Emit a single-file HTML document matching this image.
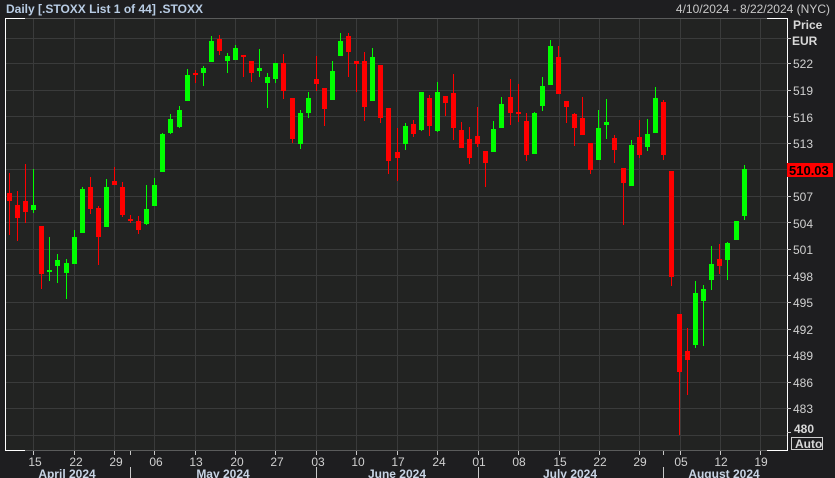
<!DOCTYPE html>
<html><head><meta charset="utf-8"><style>
html,body{margin:0;padding:0;background:#1e1e20;}
body{width:835px;height:478px;overflow:hidden;position:relative;font-family:"Liberation Sans","DejaVu Sans",sans-serif;}
svg{position:absolute;left:0;top:0;}
</style></head><body>
<svg width="835" height="478" viewBox="0 0 835 478" xmlns="http://www.w3.org/2000/svg">
<rect x="0" y="0" width="835" height="478" fill="#1e1e20"/>
<rect x="5" y="18" width="782" height="432" fill="#222322"/>
<g stroke="#3a3b3b" stroke-width="1">
<path d="M5 38.5H787M5 63.5H787M5 90.5H787M5 116.5H787M5 143.5H787M5 169.5H787M5 196.5H787M5 222.5H787M5 249.5H787M5 275.5H787M5 302.5H787M5 329.5H787M5 355.5H787M5 382.5H787M5 408.5H787M5 435.5H787"/>
<path d="M33.5 18V450M74.5 18V450M114.5 18V450M154.5 18V450M195.5 18V450M235.5 18V450M275.5 18V450M316.5 18V450M356.5 18V450M397.5 18V450M437.5 18V450M478.5 18V450M518.5 18V450M559.5 18V450M599.5 18V450M639.5 18V450M680.5 18V450M720.5 18V450M760.5 18V450"/>
</g>
<path d="M5 18.5H787M5 450.5H787" stroke="#5a5b5b"/>
<path d="M5.5 18V451M5 18.5H25M5 450.5H25M767 18.5H787.5V451M767 450.5H787" stroke="#ffffff" fill="none"/>
<g stroke="#c8c8c8">
<path d="M33.5 451V455M74.5 451V455M114.5 451V455M130.5 451V455M154.5 451V455M195.5 451V455M235.5 451V455M275.5 451V455M316.5 451V455M356.5 451V455M397.5 451V455M437.5 451V455M478.5 451V455M518.5 451V455M559.5 451V455M599.5 451V455M639.5 451V455M663.5 451V455M680.5 451V455M720.5 451V455M760.5 451V455"/>
<path d="M130.5 467V478M316.5 467V478M478.5 467V478M663.5 467V478"/>
<path d="M787 38.5H791M787 63.5H791M787 90.5H791M787 116.5H791M787 143.5H791M787 196.5H791M787 222.5H791M787 249.5H791M787 275.5H791M787 302.5H791M787 329.5H791M787 355.5H791M787 382.5H791M787 408.5H791M787 432.5H791"/>
</g>
<g font-size="12" fill="#d0d0d0" text-anchor="middle">
<text x="35" y="466">15</text><text x="76" y="466">22</text><text x="116" y="466">29</text><text x="156" y="466">06</text><text x="196" y="466">13</text><text x="237" y="466">20</text><text x="277" y="466">27</text><text x="318" y="466">03</text><text x="358" y="466">10</text><text x="398" y="466">17</text><text x="439" y="466">24</text><text x="479" y="466">01</text><text x="519" y="466">08</text><text x="560" y="466">15</text><text x="600" y="466">22</text><text x="640" y="466">29</text><text x="681" y="466">05</text><text x="721" y="466">12</text><text x="761" y="466">19</text>
</g>
<g font-size="12" font-weight="bold" fill="#c8d4e4" text-anchor="middle">
<text x="67" y="478">April 2024</text><text x="223" y="478">May 2024</text><text x="397" y="478">June 2024</text><text x="570" y="478">July 2024</text><text x="724" y="478">August 2024</text>
</g>
<g font-size="12" fill="#d0d0d0">
<text x="793" y="68">522</text><text x="793" y="95">519</text><text x="793" y="122">516</text><text x="793" y="148">513</text><text x="793" y="201">507</text><text x="793" y="228">504</text><text x="793" y="254">501</text><text x="793" y="281">498</text><text x="793" y="307">495</text><text x="793" y="334">492</text><text x="793" y="360">489</text><text x="793" y="387">486</text><text x="793" y="413">483</text>
</g>
<g font-size="12" font-weight="bold" fill="#d8d8d8">
<text x="793" y="29">Price</text><text x="792" y="45">EUR</text><text x="794" y="433">480</text><text x="795" y="448">Auto</text>
</g>
<rect x="791.5" y="437.5" width="31" height="12" fill="none" stroke="#d0d0d0"/>
<rect x="787" y="163" width="46" height="14" fill="#ff0000"/>
<text x="789" y="175" font-size="13" font-weight="bold" fill="#000">510.03</text>
<text x="6" y="13" font-size="12" font-weight="bold" fill="#b8cce4">Daily [.STOXX List 1 of 44] .STOXX</text>
<text x="830" y="13" font-size="12" fill="#c8c8c8" text-anchor="end">4/10/2024 - 8/22/2024 (NYC)</text>
<g id="red" fill="#ff0000" stroke="#ff0000" stroke-width="1">
<path fill="none" d="M9.5 173V235M17.5 191V241M25.5 164V223M41.5 226V289M90.5 177V214M98.5 206V265M114.5 167V185M122.5 182V217M130.5 215V223M138.5 216V234M195.5 70V83M219.5 35V55M243.5 55V77M251.5 61V82M283.5 54V99M292.5 98V143M316.5 56V91M324.5 88V126M348.5 33V77M356.5 61V92M364.5 52V121M380.5 65V123M388.5 108V174M397.5 128V181M413.5 120V137M429.5 95V136M445.5 96V116M453.5 74V140M461.5 122V148M469.5 127V164M477.5 107V147M485.5 151V187M510.5 79V125M518.5 84V122M526.5 113V161M558.5 46V94M566.5 101V123M574.5 113V146M582.5 97V135M590.5 143V174M614.5 135V163M623.5 168V225M639.5 120V158M663.5 100V160M671.5 171V286M679.5 314V435M687.5 328V395M719.5 244V274"/>
<g stroke="none">
<rect x="7" y="193" width="5" height="8"/><rect x="15" y="205" width="5" height="13"/><rect x="23" y="201" width="5" height="11"/><rect x="39" y="226" width="5" height="48"/><rect x="88" y="187" width="5" height="22"/><rect x="96" y="208" width="5" height="29"/><rect x="112" y="181" width="5" height="4"/><rect x="120" y="187" width="5" height="28"/><rect x="128" y="219" width="5" height="2"/><rect x="136" y="221" width="5" height="9"/><rect x="193" y="73" width="5" height="2"/><rect x="217" y="39" width="5" height="12"/><rect x="241" y="55" width="5" height="2"/><rect x="249" y="61" width="5" height="12"/><rect x="281" y="63" width="5" height="28"/><rect x="290" y="98" width="5" height="41"/><rect x="314" y="79" width="5" height="5"/><rect x="322" y="88" width="5" height="21"/><rect x="346" y="36" width="5" height="16"/><rect x="354" y="61" width="5" height="3"/><rect x="362" y="61" width="5" height="46"/><rect x="378" y="65" width="5" height="53"/><rect x="386" y="108" width="5" height="53"/><rect x="395" y="152" width="5" height="6"/><rect x="411" y="124" width="5" height="10"/><rect x="427" y="98" width="5" height="28"/><rect x="443" y="96" width="5" height="7"/><rect x="451" y="93" width="5" height="35"/><rect x="459" y="130" width="5" height="18"/><rect x="467" y="139" width="5" height="19"/><rect x="475" y="136" width="5" height="8"/><rect x="483" y="151" width="5" height="12"/><rect x="508" y="97" width="5" height="16"/><rect x="516" y="112" width="5" height="2"/><rect x="524" y="121" width="5" height="34"/><rect x="556" y="57" width="5" height="37"/><rect x="564" y="101" width="5" height="6"/><rect x="572" y="114" width="5" height="14"/><rect x="580" y="118" width="5" height="17"/><rect x="588" y="143" width="5" height="27"/><rect x="612" y="138" width="5" height="12"/><rect x="621" y="168" width="5" height="15"/><rect x="637" y="137" width="5" height="18"/><rect x="661" y="102" width="5" height="53"/><rect x="669" y="171" width="5" height="106"/><rect x="677" y="314" width="5" height="58"/><rect x="685" y="351" width="5" height="9"/><rect x="717" y="259" width="5" height="7"/>
</g></g>
<g id="green" fill="#00ff00" stroke="#00ff00" stroke-width="1">
<path fill="none" d="M33.5 169V213M49.5 237V281M57.5 254V283M66.5 259V299M74.5 230V264M82.5 187V233M106.5 179V227M146.5 185V225M154.5 178V206M162.5 133V172M170.5 114V134M179.5 106V128M187.5 69V101M203.5 66V86M211.5 36V62M227.5 53V73M235.5 45V60M259.5 49V77M267.5 73V108M275.5 63V83M300.5 110V149M308.5 92V118M332.5 61V100M340.5 33V56M372.5 48V101M405.5 123V150M421.5 92V131M437.5 82V132M493.5 121V152M501.5 97V128M534.5 112V154M542.5 77V111M550.5 40V85M598.5 110V160M606.5 99V139M631.5 140V186M647.5 119V151M655.5 87V133M695.5 281V348M703.5 285V346M711.5 246V290M727.5 242V280M736.5 221V240M744.5 165V220"/>
<g stroke="none">
<rect x="31" y="205" width="5" height="5"/><rect x="47" y="270" width="5" height="2"/><rect x="55" y="260" width="5" height="6"/><rect x="64" y="263" width="5" height="10"/><rect x="72" y="237" width="5" height="27"/><rect x="80" y="189" width="5" height="44"/><rect x="104" y="187" width="5" height="40"/><rect x="144" y="209" width="5" height="15"/><rect x="152" y="185" width="5" height="21"/><rect x="160" y="134" width="5" height="38"/><rect x="168" y="119" width="5" height="14"/><rect x="177" y="110" width="5" height="17"/><rect x="185" y="75" width="5" height="26"/><rect x="201" y="68" width="5" height="5"/><rect x="209" y="41" width="5" height="21"/><rect x="225" y="56" width="5" height="5"/><rect x="233" y="48" width="5" height="12"/><rect x="257" y="68" width="5" height="3"/><rect x="265" y="77" width="5" height="6"/><rect x="273" y="63" width="5" height="16"/><rect x="298" y="113" width="5" height="31"/><rect x="306" y="98" width="5" height="15"/><rect x="330" y="71" width="5" height="29"/><rect x="338" y="41" width="5" height="15"/><rect x="370" y="57" width="5" height="44"/><rect x="403" y="126" width="5" height="18"/><rect x="419" y="92" width="5" height="38"/><rect x="435" y="92" width="5" height="39"/><rect x="491" y="129" width="5" height="23"/><rect x="499" y="104" width="5" height="24"/><rect x="532" y="113" width="5" height="41"/><rect x="540" y="86" width="5" height="20"/><rect x="548" y="46" width="5" height="39"/><rect x="596" y="128" width="5" height="32"/><rect x="604" y="122" width="5" height="3"/><rect x="629" y="145" width="5" height="41"/><rect x="645" y="134" width="5" height="13"/><rect x="653" y="98" width="5" height="35"/><rect x="693" y="293" width="5" height="52"/><rect x="701" y="289" width="5" height="12"/><rect x="709" y="264" width="5" height="16"/><rect x="725" y="243" width="5" height="17"/><rect x="734" y="221" width="5" height="19"/><rect x="742" y="169" width="5" height="47"/>
</g></g>
</svg>
</body></html>
